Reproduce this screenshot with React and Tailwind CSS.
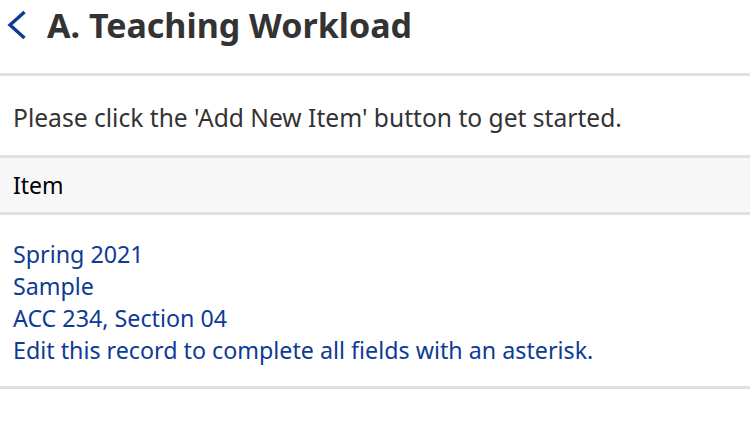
import React from "react";

const items = [
  "Spring 2021",
  "Sample",
  "ACC 234, Section 04",
  "Edit this record to complete all fields with an asterisk.",
];

const App = () => {
  return (
    <div className="min-h-screen bg-white font-['Noto_Sans',sans-serif] text-[#333]">
      <div className="h-[76px] border-b-[3px] border-[#e0e0e0]">
        <div className="flex h-[49px] items-center pl-[7px]">
          <button className="flex h-[30px] w-[20px] items-center text-[#0e3b95]">
            <svg width="20" height="30" viewBox="0 0 20 30" fill="none">
              <path d="M17.5 2 L3 15 L17.5 28" stroke="currentColor" strokeWidth="3.4" />
            </svg>
          </button>
          <h1 className="ml-[20px] text-[34px] font-bold leading-none text-[#333]">
            A. Teaching Workload
          </h1>
        </div>
      </div>

      <p className="flex h-[82px] items-center border-b-[3px] border-[#e0e0e0] px-[13px] pt-[6px] text-[24.6px]">
        Please click the 'Add New Item' button to get started.
      </p>

      <div className="flex h-[57px] items-center border-b-[3px] border-[#e0e0e0] bg-[#f7f7f7] px-[13px] text-[23px] text-black">
        Item
      </div>

      <ul className="border-b-[3px] border-[#e0e0e0] px-[13px] pb-[20px] pt-[23px] text-[23.25px] leading-[32px] text-[#0e3b95]">
        {items.map((item, index) => (
          <li key={index}>{item}</li>
        ))}
      </ul>
    </div>
  );
};

export default App;
